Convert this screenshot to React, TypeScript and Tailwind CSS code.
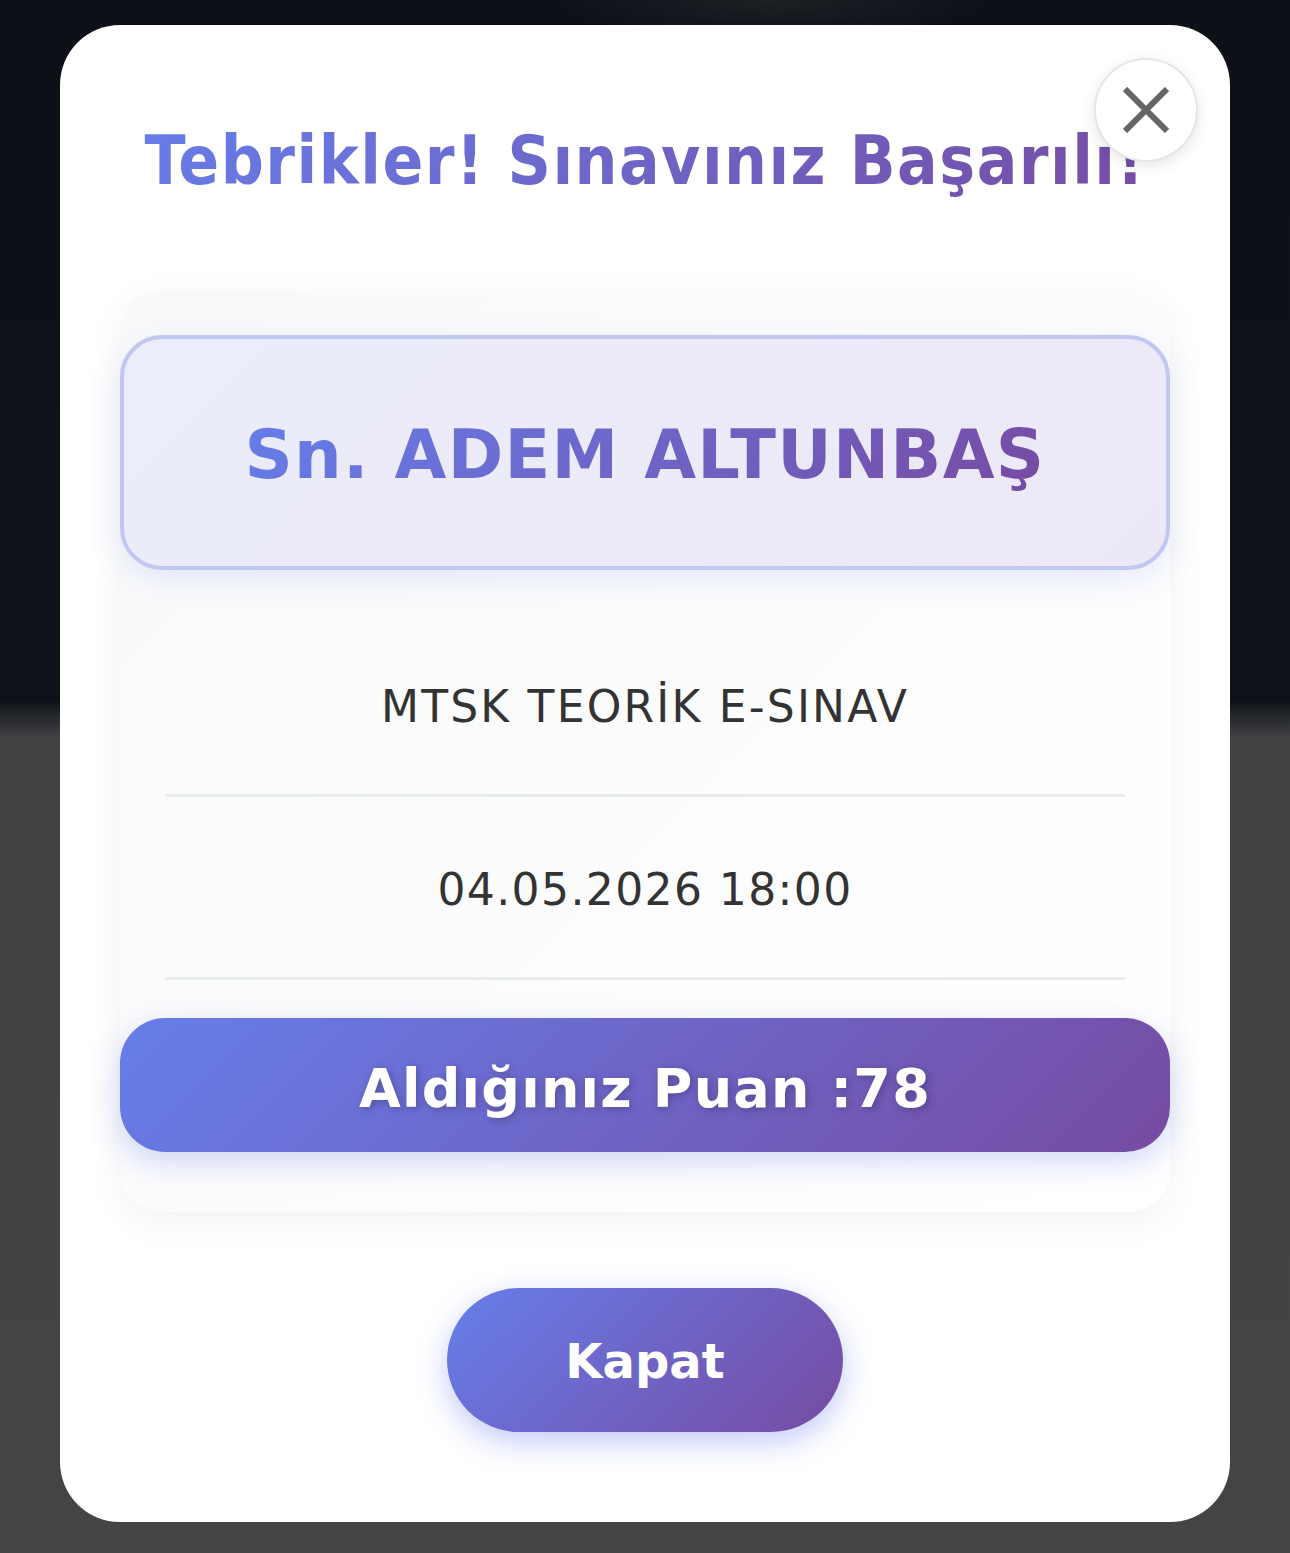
import React from 'react';

const gradText = 'bg-[linear-gradient(135deg,#667eea_0%,#764ba2_100%)] bg-clip-text text-transparent';

const CloseIcon: React.FC = () => (
  <svg width="46" height="46" viewBox="0 0 46 46" fill="none">
    <path d="M2 2 L44 44 M44 2 L2 44" stroke="#666666" strokeWidth="6" />
  </svg>
);

const InfoRow: React.FC<{ text: string; spacing: string }> = ({ text, spacing }) => (
  <div className={`border-b-[3px] border-[#e9ecef] pt-[60px] pb-[54px] text-center font-['DejaVu_Sans',sans-serif] text-[44px] leading-[66px] text-[#333333] ${spacing}`}>
    {text}
  </div>
);

const App: React.FC = () => {
  return (
    <div className="min-h-[1553px] w-full bg-[radial-gradient(ellipse_220px_40px_at_770px_0px,#1d2025,transparent),linear-gradient(to_bottom,#0d1117_0px,#0e1218_700px,#414244_738px,#434446_1553px)] px-[60px] pt-[25px] pb-[31px]">
      <div className="relative rounded-[60px] bg-white px-[60px] pt-[96px] pb-[90px]">
        <button className="absolute right-[32px] top-[33px] flex h-[104px] w-[104px] items-center justify-center rounded-full border-2 border-[#e6e6e6] bg-white shadow-[0_4px_15px_rgba(0,0,0,0.1)]">
          <CloseIcon />
        </button>

        <h2 className={`text-center font-['DejaVu_Sans_Condensed','DejaVu_Sans',sans-serif] font-stretch-condensed text-[67px] font-bold leading-[80px] tracking-[1.5px] ${gradText}`}>
          Tebrikler! Sınavınız Başarılı!
        </h2>

        <div className="mt-[89px] rounded-[42px] bg-[linear-gradient(135deg,#f8f9fa_0%,#ffffff_100%)] pt-[45px] pb-[60px] shadow-[0_10px_40px_rgba(0,0,0,0.05)]">
          <div className="rounded-[42px] border-4 border-[#c0c7f1] bg-[linear-gradient(135deg,#ebedfa_0%,#ede8f6_100%)] pt-[76px] pb-[71px] text-center shadow-[0_10px_30px_rgba(102,126,234,0.15)]">
            <span className={`font-['DejaVu_Sans',sans-serif] text-[67px] font-bold leading-[80px] tracking-[1.3px] ${gradText}`}>
              Sn. ADEM ALTUNBAŞ
            </span>
          </div>

          <div className="mx-[45px] mt-[44px]">
            <InfoRow text="MTSK TEORİK E-SINAV" spacing="tracking-[2.2px]" />
            <InfoRow text="04.05.2026 18:00" spacing="tracking-[1.4px]" />
          </div>

          <div className="mt-[38px] rounded-[45px] bg-[linear-gradient(135deg,#667eea_0%,#764ba2_100%)] pt-[39px] pb-[31px] text-center font-['DejaVu_Sans',sans-serif] text-[54px] font-bold leading-[64px] tracking-[1.2px] text-white shadow-[0_10px_30px_rgba(102,126,234,0.3)] [text-shadow:2px_2px_8px_rgba(0,0,0,0.25)]">
            Aldığınız Puan :78
          </div>
        </div>

        <div className="mt-[76px] flex justify-center">
          <button className="w-[396px] rounded-full bg-[linear-gradient(135deg,#667eea_0%,#764ba2_100%)] pt-[45px] pb-[43px] font-['DejaVu_Sans',sans-serif] text-[48px] font-bold leading-[56px] text-white shadow-[0_10px_30px_rgba(102,126,234,0.4)]">
            Kapat
          </button>
        </div>
      </div>
    </div>
  );
};

export default App;
